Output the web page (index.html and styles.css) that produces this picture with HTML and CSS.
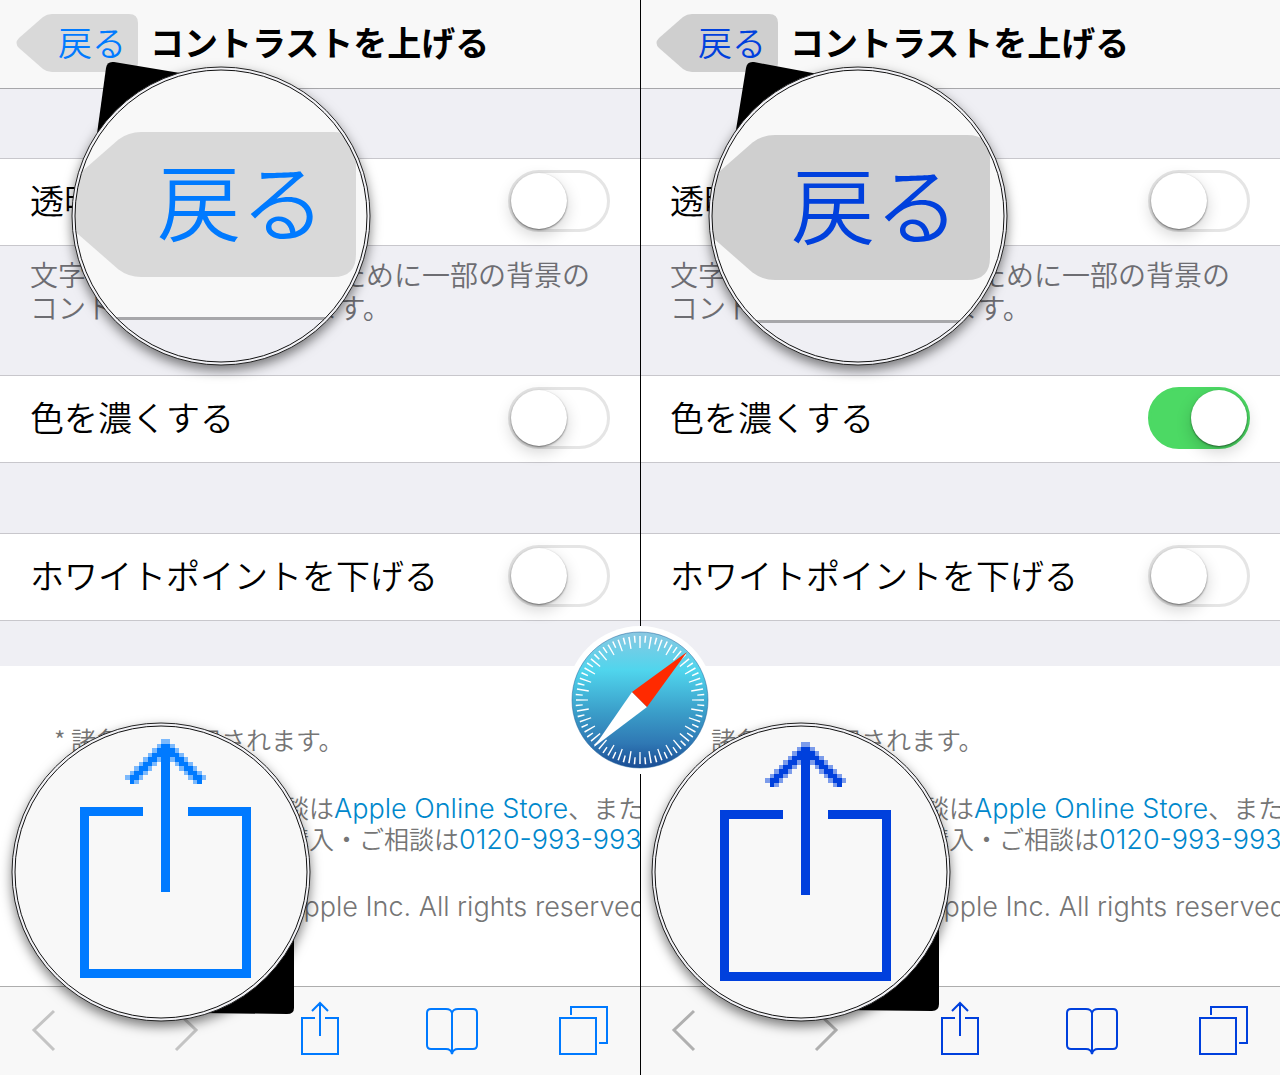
FILE: index.html
```html
<!DOCTYPE html>
<html lang="ja">
<head>
  <meta charset="UTF-8">
  <meta name="viewport" content="width=device-width, initial-scale=1.0">
  <title>コントラストを上げる</title>
  <link rel="stylesheet" href="styles.css">
</head>
<body>
  <svg class="defs" aria-hidden="true">
    <defs>
      <symbol id="share" viewBox="0 0 52 60">
        <path d="M21 17H8V53H44V17H31M26 2V35M18 10L26 2L34 10" />
      </symbol>
      <symbol id="book" viewBox="0 0 52 60">
        <path d="M25 53V12Q24 8 19 8H4Q0 8 0 12V44Q0 48 4 48H19Q24 48 25 53Q26 48 31 48H46Q50 48 50 44V12Q50 8 46 8H31Q26 8 25 12" />
      </symbol>
      <symbol id="tabs" viewBox="0 0 52 60">
        <path d="M1 17H37V53H1ZM12 14V6H48V42H40" />
      </symbol>
      <symbol id="prev" viewBox="0 0 52 60">
        <path d="M25 10L5 29L25 49" />
      </symbol>
      <symbol id="next" viewBox="0 0 52 60">
        <path d="M14 10L34 29L14 49" />
      </symbol>
      <clipPath id="glass"><circle cx="150" cy="150" r="146" /></clipPath>
      <path id="tag" d="M36 0H113Q122 0 122 9V49Q122 58 113 58H36Q31 58 27 55L3 34Q-2 29 3 24L27 3Q31 0 36 0Z" />
      <!-- share icon, one unit per enlarged pixel -->
      <g id="big-share" shape-rendering="crispEdges">
        <path d="M-5 15H-19V53H19V15H5V17H17V51H-17V17H-5ZM-1 1H1V34H-1Z" />
        <path id="wing" d="M0 1H-1V2H-2V3H-3V4H-4V5H-5V6H-6V7H-7V8H-8V10H-7V9H-6V8H-5V7H-4V6H-3V5H-2V4H0Z" />
        <path id="wing-soft" opacity=".5" d="M-1 0H0V1H-1ZM-2 1H-1V2H-2ZM-3 2H-2V3H-3ZM-4 3H-3V4H-4ZM-5 4H-4V5H-5ZM-6 5H-5V6H-6ZM-7 6H-6V7H-7ZM-8 7H-7V8H-8ZM-9 8H-8V9H-9ZM-7 9H-6V10H-7ZM-6 8H-5V9H-6ZM-5 7H-4V8H-5ZM-4 6H-3V7H-4ZM-3 5H-2V6H-3ZM-2 4H-1V5H-2Z" />
        <use href="#wing" transform="scale(-1 1)" />
        <use href="#wing-soft" transform="scale(-1 1)" />
      </g>
      <linearGradient id="sky" x1="0" y1="0" x2="0" y2="1">
        <stop offset="0" stop-color="#8ac8e2" />
        <stop offset=".28" stop-color="#50d5ed" />
        <stop offset=".6" stop-color="#3a9cc8" />
        <stop offset=".82" stop-color="#2f78b4" />
        <stop offset="1" stop-color="#194c94" />
      </linearGradient>
    </defs>
  </svg>

  <main class="compare">
    <section class="phone">
      <header class="nav">
        <button type="button" class="back">戻る</button>
        <h1>コントラストを上げる</h1>
      </header>
      <div class="settings">
        <label class="row"><span>透明度を下げる</span><input type="checkbox" class="switch"></label>
        <p class="note">文字の読みやすさを増すために一部の背景の<br>コントラストを強調します。</p>
        <label class="row"><span>色を濃くする</span><input type="checkbox" class="switch"></label>
        <label class="row last"><span>ホワイトポイントを下げる</span><input type="checkbox" class="switch"></label>
      </div>
      <div class="web">
        <p>* 諸条件が適用されます。</p>
        <p class="contact">製品のご購入・ご相談は<a href="#store">Apple Online Store</a>、または<br>お電話での製品のご購入・ご相談は<a href="#tel">0120-993-993</a></p>
        <p class="copyright">Copyright © 2014 Apple Inc. All rights reserved.</p>
      </div>
      <footer class="toolbar">
        <button type="button" class="tool off" aria-label="前へ"><svg><use href="#prev" /></svg></button>
        <button type="button" class="tool off" aria-label="次へ"><svg><use href="#next" /></svg></button>
        <button type="button" class="tool" aria-label="共有"><svg><use href="#share" /></svg></button>
        <button type="button" class="tool" aria-label="ブックマーク"><svg><use href="#book" /></svg></button>
        <button type="button" class="tool" aria-label="タブ"><svg><use href="#tabs" /></svg></button>
      </footer>

      <svg class="lens lens-back" viewBox="0 0 300 300">
        <path d="M25 75L35 2Q36 -5 43 -4L115 8L150 150Z" />
        <circle class="rim" cx="150" cy="150" r="149" />
        <g clip-path="url(#glass)">
          <rect class="glass-bar" width="300" height="300" />
          <rect class="glass-page" y="254" width="300" height="50" />
          <rect class="glass-line" y="251" width="300" height="3" />
          <use href="#tag" class="glass-tag" transform="translate(-20 66) scale(2.5)" />
          <text class="glass-text" x="86" y="169">戻る</text>
        </g>
        <circle class="inner-rim" cx="150" cy="150" r="146" />
      </svg>
      <svg class="lens lens-share" viewBox="0 0 300 300">
        <path d="M150 150L283 200V286Q283 292 276 292L190 291Z" />
        <circle class="rim" cx="150" cy="150" r="149" />
        <circle class="glass-bar" cx="150" cy="150" r="146" />
        <use href="#big-share" class="glass-icon" transform="translate(154.5 17) scale(4.5)" />
        <circle class="inner-rim" cx="150" cy="150" r="146" />
      </svg>
    </section>

    <section class="phone dark">
      <header class="nav">
        <button type="button" class="back">戻る</button>
        <h1>コントラストを上げる</h1>
      </header>
      <div class="settings">
        <label class="row"><span>透明度を下げる</span><input type="checkbox" class="switch"></label>
        <p class="note">文字の読みやすさを増すために一部の背景の<br>コントラストを強調します。</p>
        <label class="row"><span>色を濃くする</span><input type="checkbox" class="switch" checked></label>
        <label class="row last"><span>ホワイトポイントを下げる</span><input type="checkbox" class="switch"></label>
      </div>
      <div class="web">
        <p>* 諸条件が適用されます。</p>
        <p class="contact">製品のご購入・ご相談は<a href="#store">Apple Online Store</a>、または<br>お電話での製品のご購入・ご相談は<a href="#tel">0120-993-993</a></p>
        <p class="copyright">Copyright © 2014 Apple Inc. All rights reserved.</p>
      </div>
      <footer class="toolbar">
        <button type="button" class="tool off" aria-label="前へ"><svg><use href="#prev" /></svg></button>
        <button type="button" class="tool off" aria-label="次へ"><svg><use href="#next" /></svg></button>
        <button type="button" class="tool" aria-label="共有"><svg><use href="#share" /></svg></button>
        <button type="button" class="tool" aria-label="ブックマーク"><svg><use href="#book" /></svg></button>
        <button type="button" class="tool" aria-label="タブ"><svg><use href="#tabs" /></svg></button>
      </footer>

      <svg class="lens lens-back" viewBox="0 0 300 300">
        <path d="M27 70L38 2Q39 -5 46 -4L110 8L150 150Z" />
        <circle class="rim" cx="150" cy="150" r="149" />
        <g clip-path="url(#glass)">
          <rect class="glass-bar" width="300" height="300" />
          <rect class="glass-page" y="257" width="300" height="50" />
          <rect class="glass-line" y="254" width="300" height="3" />
          <use href="#tag" class="glass-tag" transform="translate(-23 69) scale(2.5)" />
          <text class="glass-text" x="83" y="172">戻る</text>
        </g>
        <circle class="inner-rim" cx="150" cy="150" r="146" />
      </svg>
      <svg class="lens lens-share" viewBox="0 0 300 300">
        <path d="M150 150L288 200V282Q288 289 281 289L190 288Z" />
        <circle class="rim" cx="150" cy="150" r="149" />
        <circle class="glass-bar" cx="150" cy="150" r="146" />
        <use href="#big-share" class="glass-icon" transform="translate(154.5 20) scale(4.5)" />
        <circle class="inner-rim" cx="150" cy="150" r="146" />
      </svg>
    </section>

    <svg class="safari" viewBox="-74 -74 148 148" role="img" aria-label="Safari">
      <circle r="74" fill="#fff" />
      <circle r="68" fill="url(#sky)" stroke="#1f6299" stroke-opacity=".5" />
      <circle class="ticks" r="58" stroke-width="12" pathLength="360" stroke-dasharray="1.4 8.6" stroke-dashoffset=".7" />
      <circle class="ticks" r="61" stroke-width="7" pathLength="360" stroke-dasharray="1.4 8.6" stroke-dashoffset="5.7" />
      <path d="M-8 -8L7 7L-46 47Z" fill="#fff" />
      <path d="M-8 -8L7 7L47 -48Z" fill="#ff2a00" />
    </svg>
  </main>
</body>
</html>
```
FILE: styles.css
```css
* {
  box-sizing: border-box;
}
body {
  margin: 0;
  font-family: "Noto Sans CJK JP", sans-serif;
  font-weight: 350;
  color: #000;
}
h1, p {
  margin: 0;
}
button {
  border: none;
  padding: 0;
  font: inherit;
  cursor: pointer;
}
.defs {
  position: absolute;
  width: 0;
  height: 0;
}

.compare {
  position: relative;
  display: grid;
  grid-template-columns: 1fr 1fr;
  min-height: 100vh;
}
.phone {
  --tint: #007aff;
  --tag: #d9d9d9;
  --off: #c4c4c4;
  position: relative;
  display: flex;
  flex-direction: column;
  min-width: 0;
  overflow: hidden;
  background: #fff;
}
.dark {
  --tint: #0040dd;
  --tag: #cfcfcf;
  --off: #b0b0b0;
}
/* line between the two screens */
.dark::before {
  content: "";
  position: absolute;
  z-index: 1;
  top: 0;
  bottom: 0;
  left: 0;
  width: 1px;
  background: #000;
}

.nav {
  display: flex;
  align-items: center;
  gap: 12px;
  height: 89px;
  padding: 0 16px 2px;
  background: #f8f8f8;
  border-bottom: 1px solid #a7a7aa;
}
.back {
  flex: none;
  width: 122px;
  height: 58px;
  padding: 0 0 2px 30px;
  background: var(--tag);
  color: var(--tint);
  font-size: 34px;
  line-height: 56px;
  clip-path: path("M36 0H113Q122 0 122 9V49Q122 58 113 58H36Q31 58 27 55L3 34Q-2 29 3 24L27 3Q31 0 36 0Z");
}
.nav h1 {
  padding-bottom: 2px;
  font-size: 34px;
  font-weight: 700;
  line-height: 56px;
  white-space: nowrap;
}

.settings {
  padding: 69px 0 45px;
  background: #efeff4;
}
.row {
  display: flex;
  align-items: center;
  justify-content: space-between;
  height: 88px;
  padding: 0 30px 2px;
  background: #fff;
  border: solid #c8c7cc;
  border-width: 1px 0;
  font-size: 34px;
  white-space: nowrap;
}
.row span {
  padding-bottom: 4px;
}
.last {
  margin-top: 70px;
}
.note {
  height: 129px;
  padding: 12px 30px 0;
  color: #6d6d72;
  font-size: 28px;
  line-height: 33px;
  white-space: nowrap;
}

.switch {
  appearance: none;
  flex: none;
  width: 102px;
  height: 62px;
  margin: 0;
  padding: 0;
  border: 3px solid #e5e5e5;
  border-radius: 31px;
  background: #fff;
}
.switch::before {
  content: "";
  display: block;
  width: 56px;
  height: 56px;
  border-radius: 50%;
  background: #fff;
  box-shadow: 0 1px 2px rgba(0, 0, 0, .5), 0 6px 16px rgba(0, 0, 0, .18);
}
.switch:checked {
  background: #4cd964;
  border-color: #4cd964;
}
.switch:checked::before {
  margin-left: 40px;
}

.web {
  flex: 1;
  padding: 58px 0 0 54px;
  color: #757575;
  font-size: 25px;
  line-height: 31px;
  white-space: nowrap;
}
.web a {
  color: #0088cc;
  font-family: Inter, sans-serif;
  font-size: 27px;
  font-weight: 300;
  line-height: 1;
  text-decoration: none;
}
.contact {
  margin-top: 37px;
  padding-left: 5px;
}
.copyright {
  margin-top: 37px;
  font-family: Inter, sans-serif;
  font-size: 27px;
  font-weight: 300;
}

.toolbar {
  display: flex;
  align-items: center;
  justify-content: space-between;
  height: 89px;
  padding: 0 29px;
  background: #f8f8f8;
  border-top: 1px solid #adadad;
}
.tool {
  width: 52px;
  height: 60px;
  background: none;
  color: var(--tint);
}
.tool svg {
  display: block;
  width: 52px;
  height: 60px;
  overflow: visible;
  fill: none;
  stroke: currentColor;
  stroke-width: 2px;
}
symbol {
  overflow: visible;
}
.off {
  color: var(--off);
}
.off svg {
  stroke-width: 3px;
}

/* magnifier callouts */
.lens {
  position: absolute;
  width: 300px;
  height: 300px;
  overflow: visible;
}
.lens-back {
  top: 66px;
  left: 71px;
}
.dark .lens-back {
  left: 68px;
}
.lens-share {
  top: 722px;
  left: 11px;
}
.rim {
  fill: #f2f2f6;
  stroke: #222;
  filter: drop-shadow(0 5px 6px rgba(0, 0, 0, .5));
}
.inner-rim {
  fill: none;
  stroke: #111;
}
.glass-bar {
  fill: #f8f8f8;
}
.glass-page {
  fill: #efeff4;
}
.glass-line {
  fill: #a7a7aa;
}
.glass-tag {
  fill: var(--tag);
}
.glass-text {
  fill: var(--tint);
  font-size: 84px;
}
.glass-icon {
  fill: var(--tint);
}

.safari {
  position: absolute;
  z-index: 2;
  top: 626px;
  left: calc(50% - 74px);
  width: 148px;
  height: 148px;
}
.ticks {
  fill: none;
  stroke: #fff;
}
```
